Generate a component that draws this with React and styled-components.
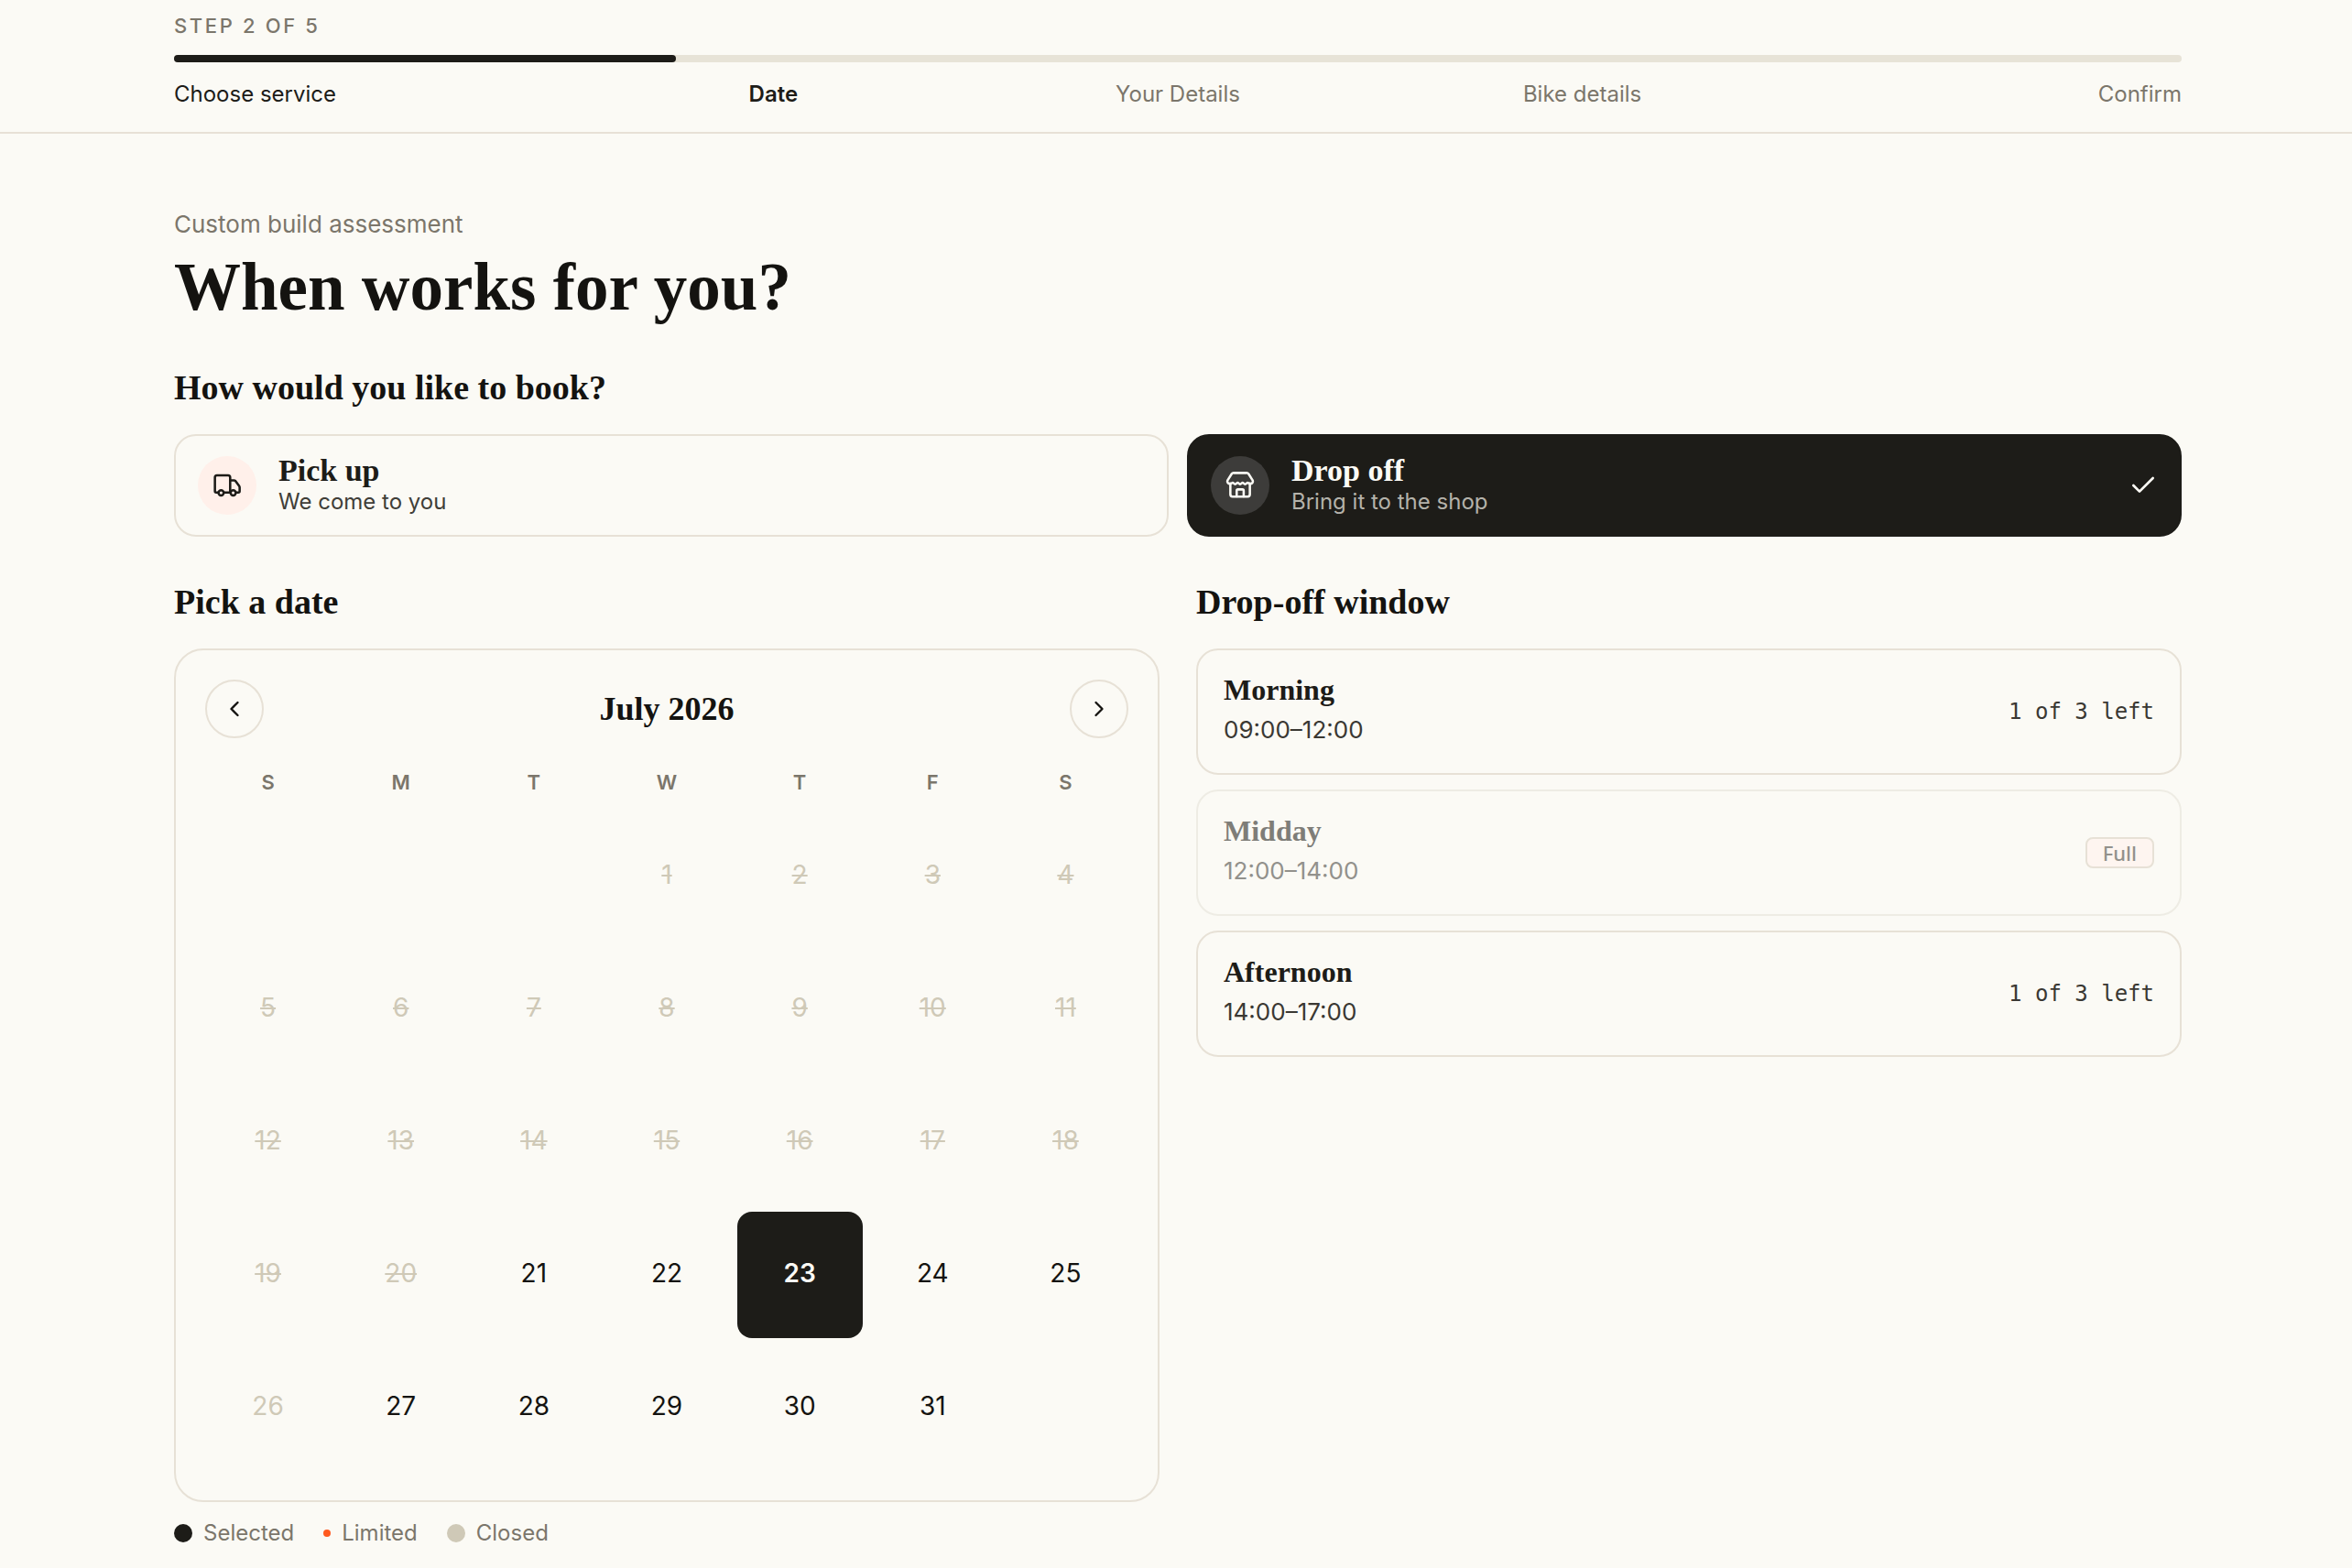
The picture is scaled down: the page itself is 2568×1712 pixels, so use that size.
import React, { useState } from "react";
import styled, { createGlobalStyle } from "styled-components";

const ink = "#1d1c18";
const paper = "#fbfaf5";
const line = "#e7e1d6";
const muted = "#7b766b";
const faint = "#cfc9b7";
const serif = `"Liberation Serif", "Times New Roman", serif`;
const sans = `Inter, "Liberation Sans", sans-serif`;

const Global = createGlobalStyle`
  *, *::before, *::after { box-sizing: border-box; }
  body { margin: 0; background: ${paper}; color: #141310; font-family: ${sans}; }
  button { font: inherit; color: inherit; cursor: pointer; margin: 0; }
  h1, h2, h3, p, ol, ul { margin: 0; padding: 0; }
`;

const Shell = styled.div`
  width: 100%;
  padding: 0 186px 0 190px;
`;

const Header = styled.header`
  border-bottom: 2px solid ${line};
`;

const HeaderInner = styled(Shell)`
  padding-top: 12px;
  padding-bottom: 24px;
`;

const StepCount = styled.p`
  font-size: 22px;
  line-height: 32px;
  font-weight: 500;
  letter-spacing: 0.12em;
  text-transform: uppercase;
  color: ${muted};
`;

const Track = styled.div`
  height: 8px;
  margin-top: 16px;
  border-radius: 4px;
  background: #e7e3d7;
`;

const Fill = styled.div`
  width: 25%;
  height: 100%;
  border-radius: 4px;
  background: ${ink};
`;

const Steps = styled.ol`
  display: flex;
  gap: 16px;
  margin-top: 18px;
  list-style: none;
`;

const Step = styled.li`
  flex: 1;
  font-size: 24px;
  line-height: 34px;
  text-align: center;
  color: ${(p) => (p.$state === "todo" ? muted : ink)};
  font-weight: ${(p) => (p.$state === "current" ? 600 : 400)};
  &:first-child { text-align: left; }
  &:last-child { text-align: right; }
`;

const Main = styled(Shell).attrs({ as: "main" })`
  padding-top: 80px;
`;

const Eyebrow = styled.p`
  font-size: 26px;
  line-height: 38px;
  color: ${muted};
`;

const Title = styled.h1`
  font-family: ${serif};
  font-size: 73px;
  line-height: 84px;
  font-weight: 700;
  margin-top: 8px;
`;

const SectionTitle = styled.h2`
  font-family: ${serif};
  font-size: 38px;
  line-height: 46px;
  font-weight: 700;
  margin-bottom: 28px;
`;

const Section = styled.section`
  margin-top: 44px;
`;

const Modes = styled.div`
  display: grid;
  grid-template-columns: 1fr 1fr;
  gap: 20px;
`;

const Mode = styled.button`
  display: flex;
  align-items: center;
  gap: 24px;
  height: 112px;
  padding: 0 24px;
  border: 2px solid ${(p) => (p.$on ? ink : line)};
  border-radius: 24px;
  background: ${(p) => (p.$on ? ink : "transparent")};
  color: ${(p) => (p.$on ? paper : ink)};
  text-align: left;
`;

const IconDisc = styled.span`
  display: grid;
  place-items: center;
  width: 64px;
  height: 64px;
  border-radius: 50%;
  background: ${(p) => (p.$on ? "#3d3c3a" : "#fff0ea")};
`;

const ModeText = styled.span`
  flex: 1;
  display: flex;
  flex-direction: column;
`;

const ModeTitle = styled.span`
  font-family: ${serif};
  font-size: 34px;
  line-height: 36px;
  font-weight: 700;
`;

const ModeNote = styled.span`
  font-size: 24px;
  line-height: 32px;
  color: ${(p) => (p.$on ? "#b4b2aa" : "#403e38")};
`;

const Columns = styled.div`
  display: grid;
  grid-template-columns: 1fr 1fr;
  align-items: start;
  gap: 40px;
  margin-top: 48px;
`;

const Calendar = styled.div`
  padding: 32px;
  border: 2px solid ${line};
  border-radius: 32px;
`;

const CalendarHead = styled.div`
  display: flex;
  align-items: center;
  justify-content: space-between;
`;

const RoundButton = styled.button`
  display: grid;
  place-items: center;
  width: 64px;
  height: 64px;
  padding: 0;
  border: 2px solid ${line};
  border-radius: 50%;
  background: transparent;
`;

const Month = styled.h3`
  font-family: ${serif};
  font-size: 36px;
  line-height: 44px;
  font-weight: 700;
`;

const Week = styled.div`
  display: grid;
  grid-template-columns: repeat(7, 1fr);
  gap: 8px;
`;

const WeekNames = styled(Week)`
  margin: 32px 0 18px;
`;

const WeekName = styled.span`
  font-size: 22px;
  line-height: 32px;
  font-weight: 600;
  text-align: center;
  color: ${muted};
`;

const Day = styled.button`
  aspect-ratio: 1;
  padding: 0 0 4px;
  border: 0;
  border-radius: 16px;
  font-size: 28px;
  line-height: 40px;
  font-weight: ${(p) => (p.$on ? 600 : 400)};
  background: ${(p) => (p.$on ? ink : "transparent")};
  color: ${(p) => (p.$on ? paper : p.disabled ? faint : "#141310")};
  text-decoration: ${(p) => (p.$past ? "line-through" : "none")};
`;

const Legend = styled.ul`
  display: flex;
  gap: 32px;
  margin-top: 18px;
  list-style: none;
`;

const LegendItem = styled.li`
  display: flex;
  align-items: center;
  gap: 12px;
  font-size: 24px;
  line-height: 32px;
  color: ${muted};
`;

const Dot = styled.span`
  width: ${(p) => p.$size}px;
  height: ${(p) => p.$size}px;
  border-radius: 50%;
  background: ${(p) => p.$color};
`;

const Slots = styled.div`
  display: grid;
  gap: 16px;
`;

const Slot = styled.button`
  display: flex;
  align-items: center;
  justify-content: space-between;
  height: 138px;
  padding: 0 28px;
  border: 2px solid ${(p) => (p.disabled ? "#eeece4" : line)};
  border-radius: 24px;
  background: transparent;
  text-align: left;
  color: ${(p) => (p.disabled ? "#7e7d78" : ink)};
`;

const SlotText = styled.span`
  display: flex;
  flex-direction: column;
  gap: 4px;
  padding-bottom: 4px;
`;

const SlotName = styled.span`
  font-family: ${serif};
  font-size: 32px;
  line-height: 40px;
  font-weight: 700;
`;

const SlotTime = styled.span`
  font-size: 26px;
  line-height: 40px;
  color: ${(p) => (p.$full ? "#92918c" : "#3a3833")};
`;

const Left = styled.span`
  font-family: "DejaVu Sans Mono", monospace;
  font-size: 24px;
  line-height: 32px;
  color: #3a3833;
`;

const Full = styled.span`
  padding: 0 17px;
  border: 2px solid ${line};
  border-radius: 8px;
  background: #fef5f0;
  font-family: "Noto Sans", sans-serif;
  font-size: 22px;
  line-height: 30px;
  font-weight: 500;
  color: #92918c;
`;

const Icon = ({ size, stroke = 2, children }) => (
  <svg width={size} height={size} viewBox="0 0 24 24" fill="none" stroke="currentColor"
    strokeWidth={stroke} strokeLinecap="round" strokeLinejoin="round" aria-hidden="true">
    {children}
  </svg>
);

const Truck = () => (
  <Icon size={36} stroke={1.7}>
    <path d="M5.6 17.2H4.100a1 1 0 0 1-1-1V6.200a1.500 1.500 0 0 1 1.500-1.500h8.100a1.500 1.500 0 0 1 1.500 1.500v11" />
    <path d="M9.600 17.200h4.700" />
    <path d="M14.200 8.300h2.700a1.600 1.600 0 0 1 1.200.5l2.600 3.500a2 2 0 0 1 .4 1.200v2.700a1 1 0 0 1-1 1h-1.600" />
    <circle cx="7.600" cy="17.400" r="1.900" />
    <circle cx="16.400" cy="17.400" r="1.900" />
  </Icon>
);

const Shop = () => (
  <Icon size={36} stroke={1.7}>
    <path d="M4.900 10.500v8a1.600 1.600 0 0 0 1.600 1.600h11a1.600 1.600 0 0 0 1.600-1.600v-8" />
    <path d="M9.500 20v-4.200a.9.9 0 0 1 .9-.9h3.300a.9.9 0 0 1 .9.9V20" />
    <path d="M7.300 2.900h9.400a1.800 1.800 0 0 1 1.500.8l3 4.700c.5 1.300-.5 2.400-1.900 2.400-.9 0-1.500-.8-1.900-.8s-1 1.100-1.800 1.100-1.300-1.100-1.800-1.100-1 1.100-1.800 1.100-1.300-1.100-1.800-1.100-1 1.100-1.800 1.100-1.300-1.100-1.800-1.100-1 .8-1.900.8c-1.400 0-2.400-1.100-1.900-2.400l3-4.700a1.800 1.800 0 0 1 1.500-.8Z" />
  </Icon>
);

const names = ["S", "M", "T", "W", "T", "F", "S"];
const days = Array.from({ length: 31 }, (_, i) => i + 1);
const slots = [
  { name: "Morning", time: "09:00–12:00", left: 1 },
  { name: "Midday", time: "12:00–14:00", left: 0 },
  { name: "Afternoon", time: "14:00–17:00", left: 1 },
];
const modes = [
  { id: "pickup", title: "Pick up", note: "We come to you", icon: <Truck /> },
  { id: "dropoff", title: "Drop off", note: "Bring it to the shop", icon: <Shop /> },
];

export default function App() {
  const [mode, setMode] = useState("dropoff");
  const [day, setDay] = useState(23);
  return (
    <>
      <Global />
      <Header>
        <HeaderInner>
          <StepCount>Step 2 of 5</StepCount>
          <Track><Fill /></Track>
          <Steps>
            <Step $state="done">Choose service</Step>
            <Step $state="current">Date</Step>
            <Step $state="todo">Your Details</Step>
            <Step $state="todo">Bike details</Step>
            <Step $state="todo">Confirm</Step>
          </Steps>
        </HeaderInner>
      </Header>
      <Main>
        <Eyebrow>Custom build assessment</Eyebrow>
        <Title>When works for you?</Title>
        <Section>
          <SectionTitle>How would you like to book?</SectionTitle>
          <Modes>
            {modes.map((m) => {
              const on = m.id === mode;
              return (
                <Mode key={m.id} type="button" $on={on} aria-pressed={on} onClick={() => setMode(m.id)}>
                  <IconDisc $on={on}>{m.icon}</IconDisc>
                  <ModeText>
                    <ModeTitle>{m.title}</ModeTitle>
                    <ModeNote $on={on}>{m.note}</ModeNote>
                  </ModeText>
                  {on && <Icon size={32}><path d="M20 6 9 17l-5-5" /></Icon>}
                </Mode>
              );
            })}
          </Modes>
        </Section>
        <Columns>
          <section>
            <SectionTitle>Pick a date</SectionTitle>
            <Calendar>
              <CalendarHead>
                <RoundButton type="button" aria-label="Previous month">
                  <Icon size={28}><path d="m15 18-6-6 6-6" /></Icon>
                </RoundButton>
                <Month>July 2026</Month>
                <RoundButton type="button" aria-label="Next month">
                  <Icon size={28}><path d="m9 18 6-6-6-6" /></Icon>
                </RoundButton>
              </CalendarHead>
              <WeekNames>
                {names.map((n, i) => <WeekName key={i}>{n}</WeekName>)}
              </WeekNames>
              <Week>
                <span /><span /><span />
                {days.map((d) => (
                  <Day key={d} type="button" $on={d === day} $past={d < 21}
                    disabled={d < 21 || d === 26} onClick={() => setDay(d)}>
                    {d}
                  </Day>
                ))}
              </Week>
            </Calendar>
            <Legend>
              <LegendItem><Dot $size={20} $color={ink} />Selected</LegendItem>
              <LegendItem><Dot $size={8} $color="#ff5a1f" />Limited</LegendItem>
              <LegendItem><Dot $size={20} $color={faint} />Closed</LegendItem>
            </Legend>
          </section>
          <section>
            <SectionTitle>Drop-off window</SectionTitle>
            <Slots>
              {slots.map((s) => (
                <Slot key={s.name} type="button" disabled={!s.left}>
                  <SlotText>
                    <SlotName>{s.name}</SlotName>
                    <SlotTime $full={!s.left}>{s.time}</SlotTime>
                  </SlotText>
                  {s.left ? <Left>{s.left} of 3 left</Left> : <Full>Full</Full>}
                </Slot>
              ))}
            </Slots>
          </section>
        </Columns>
      </Main>
    </>
  );
}
